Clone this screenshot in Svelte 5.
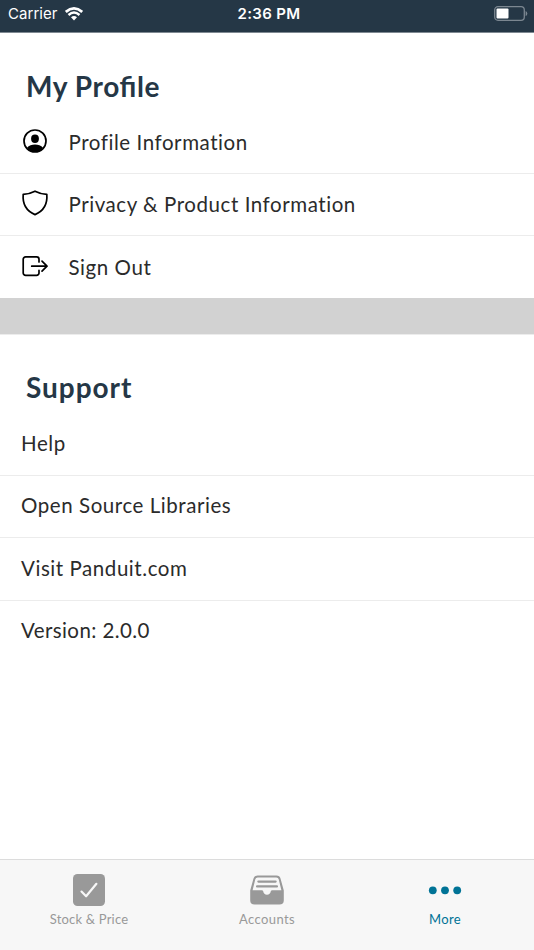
<script lang="ts">
	const profileItems = [
		{ icon: 'person', label: 'Profile Information' },
		{ icon: 'shield', label: 'Privacy & Product Information' },
		{ icon: 'exit', label: 'Sign Out' }
	];

	const supportItems = ['Help', 'Open Source Libraries', 'Visit Panduit.com', 'Version: 2.0.0'];

	const tabs = [
		{ icon: 'check', label: 'Stock & Price' },
		{ icon: 'filing', label: 'Accounts' },
		{ icon: 'more', label: 'More' }
	];

	let activeTab = $state('more');
</script>

<div class="screen">
	<header class="status-bar">
		<div class="carrier">
			<span>Carrier</span>
			<svg width="18" height="14" viewBox="0 0 18 14">
				<path d="M0.8 4.9Q9-2.1 17.2 4.9" fill="none" stroke="#fff" stroke-width="2.7" />
				<path d="M3.5 8Q9 3.2 14.5 8" fill="none" stroke="#fff" stroke-width="2.4" />
				<path d="M6 10.3Q9 7.9 12 10.3L9 13.4Z" fill="#fff" />
			</svg>
		</div>
		<span class="time">2:36 PM</span>
		<svg class="battery" width="34" height="15" viewBox="0 0 34 15">
			<rect x="0.7" y="0.7" width="29.6" height="13.6" rx="3.3" fill="none" stroke="#7c8791" stroke-width="1.3" />
			<rect x="2.5" y="2.5" width="12" height="10" rx="1" fill="#fff" />
			<path d="M31.6 5Q33.3 5.5 33.3 7.5T31.6 10Z" fill="#7c8791" />
		</svg>
	</header>

	<main>
		<section class="profile">
			<h1>My Profile</h1>
			<ul>
				{#each profileItems as item (item.icon)}
					<li class="row">
						<svg class="row-icon" width="28" height="28" viewBox="0 0 28 28">
							{#if item.icon === 'person'}
								<circle cx="14" cy="14" r="11" fill="none" stroke="#000" stroke-width="1.7" />
								<ellipse cx="14" cy="11.7" rx="3.9" ry="4.2" />
								<path d="M6 20.8C8 18.4 10.8 17.6 14 17.6S20 18.4 22 20.8Q18.9 25 14 25T6 20.8Z" />
							{:else if item.icon === 'shield'}
								<path
									d="M14 2.2C10.5 4.1 6.6 5 2.2 5.3C1.5 13.6 4.1 21.5 14 25.6C23.9 21.5 26.5 13.6 25.8 5.3C21.4 5 17.5 4.1 14 2.2Z"
									fill="none"
									stroke="#000"
									stroke-width="1.7"
									stroke-linejoin="round"
								/>
							{:else}
								<path
									d="M18 10V7.3A2.4 2.4 0 0 0 15.6 4.9H4.6A2.4 2.4 0 0 0 2.2 7.3V21A2.4 2.4 0 0 0 4.6 23.4H15.6A2.4 2.4 0 0 0 18 21V18.4M10.7 14.2H26M21 9.2L26 14.2L21 19.2"
									fill="none"
									stroke="#000"
									stroke-width="1.7"
									stroke-linecap="round"
									stroke-linejoin="round"
								/>
							{/if}
						</svg>
						<span class="label">{item.label}</span>
					</li>
				{/each}
			</ul>
		</section>

		<div class="separator"></div>

		<section class="support">
			<h1>Support</h1>
			<ul>
				{#each supportItems as item (item)}
					<li class="row"><span class="label">{item}</span></li>
				{/each}
			</ul>
		</section>
	</main>

	<nav class="tab-bar">
		{#each tabs as tab (tab.icon)}
			<button class="tab" class:active={activeTab === tab.icon} onclick={() => (activeTab = tab.icon)}>
				<svg width="36" height="34" viewBox="0 0 36 34">
					{#if tab.icon === 'check'}
						<rect x="2" y="1" width="32" height="32" rx="4.5" fill="currentColor" />
						<path
							d="M10.5 18.6L15.1 23.3L25.4 10.8"
							fill="none"
							stroke="#f7f7f7"
							stroke-width="2.2"
							stroke-linecap="round"
							stroke-linejoin="round"
						/>
					{:else if tab.icon === 'filing'}
						<path
							fill="currentColor"
							fill-rule="evenodd"
							d="M8.6 2.5H27.4Q30.8 2.5 31.5 5.6L34.8 17.5V27.2Q34.8 31.6 30.4 31.6H5.6Q1.2 31.6 1.2 27.2V17.5L4.5 5.6Q5.2 2.5 8.6 2.5ZM8.7 4.6Q6.7 4.6 6.3 6.3L3.6 17.2H12.6Q14 17.2 14.2 18.3Q14.8 21.7 18 21.7T21.8 18.3Q22 17.2 23.4 17.2H32.4L29.7 6.3Q29.3 4.6 27.3 4.6Z"
						/>
						<path d="M9.4 8.6H26.6M8.1 13.4H27.9" stroke="currentColor" stroke-width="2.3" stroke-linecap="round" />
					{:else}
						<circle cx="5.8" cy="17.3" r="3.9" fill="currentColor" />
						<circle cx="18" cy="17.3" r="3.9" fill="currentColor" />
						<circle cx="30.2" cy="17.3" r="3.9" fill="currentColor" />
					{/if}
				</svg>
				<span class="tab-label {tab.icon}">{tab.label}</span>
			</button>
		{/each}
	</nav>
</div>

<style>
	:global(body) {
		margin: 0;
	}

	.screen {
		display: flex;
		flex-direction: column;
		height: 950px;
		background: #fff;
		color: #2b2b2b;
		font-family: Lato, 'Noto Sans', sans-serif;
		overflow: hidden;
	}

	.status-bar {
		box-sizing: border-box;
		flex: none;
		display: grid;
		grid-template-columns: 1fr auto 1fr;
		height: 33px;
		padding: 0 6px 5px 8px;
		align-items: center;
		background: #253746;
		border-bottom: 1px solid #7f8992;
		color: #fff;
		font-family: Inter, Roboto, sans-serif;
		font-size: 15px;
		line-height: 18px;
	}

	.carrier {
		display: flex;
		align-items: center;
		gap: 7px;
		letter-spacing: 0.05px;
	}

	.time {
		padding-left: 2px;
		font-weight: 600;
		letter-spacing: 0.35px;
	}

	.battery {
		justify-self: end;
	}

	main {
		flex: 1;
	}

	h1 {
		margin: 0;
		padding-left: 26px;
		color: #253746;
		font-size: 28px;
		font-weight: 700;
		font-feature-settings: 'liga' 1;
		line-height: 34px;
		letter-spacing: 0.6px;
	}

	ul {
		margin: 0;
		padding: 0;
		list-style: none;
	}

	.profile {
		padding-top: 36px;
	}

	.profile h1 {
		margin-bottom: 8.5px;
	}

	.support {
		padding-top: 35px;
	}

	.support h1 {
		margin-bottom: 9.2px;
		letter-spacing: 0.95px;
	}

	.row {
		box-sizing: border-box;
		display: flex;
		align-items: center;
		height: 62.33px;
		padding-left: 21px;
		border-bottom: 1px solid #ececec;
	}

	.row:last-child {
		border-bottom-color: transparent;
	}

	.support .row {
		padding-bottom: 2px;
	}

	.row-icon {
		flex: none;
		margin-bottom: 2px;
		margin-right: 19.5px;
	}

	.label {
		padding-bottom: 0.6px;
		font-size: 20.5px;
		line-height: 26px;
		letter-spacing: 0.56px;
		white-space: nowrap;
	}

	.support .row:last-child .label {
		letter-spacing: 0.4px;
	}

	.separator {
		height: 36px;
		background: #d2d2d2;
		border-bottom: 1px solid #ececec;
	}

	.tab-bar {
		box-sizing: border-box;
		flex: none;
		display: flex;
		height: 91px;
		background: #f7f7f7;
		border-top: 1px solid #dcdcdc;
	}

	.tab {
		flex: 1;
		display: flex;
		flex-direction: column;
		align-items: center;
		padding: 13px 0 0;
		border: 0;
		background: none;
		color: #999;
		font-family: inherit;
		font-size: 13px;
		line-height: 18px;
	}

	.tab-label {
		margin-top: 3px;
		letter-spacing: 0.4px;
	}

	.tab-label.check {
		letter-spacing: 0.2px;
	}

	.tab.active {
		color: #007396;
	}
</style>
